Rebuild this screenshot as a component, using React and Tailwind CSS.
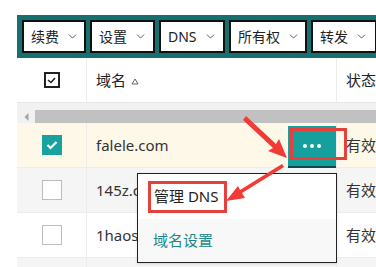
import { ChevronDown } from 'lucide-react';

const font = { fontFamily: '"Noto Sans", "Noto Sans CJK SC", sans-serif' };

const ToolButton = ({ label, w }) => (
  <div className={`h-[33px] ${w} shrink-0 border-2 border-[#111] bg-white flex items-center pl-[7px] gap-[7px] text-[14px] text-[#222]`}>
    <span>{label}</span>
    <ChevronDown className="w-[13px] h-[13px] text-[#444]" strokeWidth={1.6} />
  </div>
);

const Check = ({ on }) =>
  on ? (
    <div className="w-[20px] h-[20px] bg-[#17a2a0] flex items-center justify-center">
      <svg width="12" height="10" viewBox="0 0 12 10">
        <path d="M1.5 5 L4.5 8 L10.5 2" fill="none" stroke="white" strokeWidth="2.2" />
      </svg>
    </div>
  ) : (
    <div className="w-[20px] h-[20px] bg-white border border-[#bdbdbd]" />
  );

const Row = ({ bg, name, status, checked, children }) => (
  <div className={`h-[45px] flex ${bg} border-b border-[#ececec]`}>
    <div className="w-[70px] shrink-0 flex items-center justify-center border-r border-[#ececec]">
      {checked !== undefined && <Check on={checked} />}
    </div>
    <div className="w-[250px] shrink-0 flex items-center pl-[9px] border-r border-[#ececec] text-[15px] text-[#333] relative">
      {name}
      {children}
    </div>
    <div className="flex items-center pl-[9px] text-[15px] text-[#333] whitespace-nowrap">{status}</div>
  </div>
);

export default function App() {
  return (
    <div className="w-[376px] h-[267px] bg-white overflow-hidden relative pt-[15px] pl-[17px]" style={font}>
      <div className="h-[43px] bg-[#17706f] flex items-center gap-[4px] pl-[5px]">
        <ToolButton label="续费" w="w-[64px]" />
        <ToolButton label="设置" w="w-[65px]" />
        <ToolButton label="DNS" w="w-[66px]" />
        <ToolButton label="所有权" w="w-[78px]" />
        <ToolButton label="转发" w="w-[66px]" />
      </div>

      <div className="h-[45px] flex border-b border-[#e8e8e8] bg-white">
        <div className="w-[70px] shrink-0 flex items-center justify-center border-r border-[#ececec]">
          <div className="w-[16px] h-[16px] border-2 border-[#222] flex items-center justify-center">
            <svg width="9" height="7" viewBox="0 0 9 7">
              <path d="M1 3 L4 5.5 L8 1" fill="none" stroke="#222" strokeWidth="1.6" />
            </svg>
          </div>
        </div>
        <div className="w-[250px] shrink-0 flex items-center pl-[9px] gap-[5px] border-r border-[#ececec] text-[15px] text-[#222]">
          域名
          <svg width="8" height="7" viewBox="0 0 8 7" className="mt-[2px]">
            <path d="M4 1 L7 6 L1 6 Z" fill="none" stroke="#666" strokeWidth="1" />
          </svg>
        </div>
        <div className="flex items-center pl-[9px] text-[15px] text-[#222] whitespace-nowrap">状态</div>
      </div>

      <div className="h-[20px] bg-[#f1f1f1] flex items-end">
        <div className="w-[18px] h-[13px] flex items-center justify-center">
          <svg width="5" height="8" viewBox="0 0 5 8">
            <path d="M4.5 0 L0.5 4 L4.5 8 Z" fill="#a3a3a3" />
          </svg>
        </div>
        <div className="flex-1 h-[13px] bg-[#c1c1c1]" />
      </div>

      <Row bg="bg-[#fdf8e8]" name="falele.com" status="有效" checked>
        <div className="absolute right-0 top-[3px] w-[48px] h-[42px] bg-[#159f9d] border-b-2 border-[#0d4a49] flex items-center justify-center gap-[3px]">
          <span className="w-[4px] h-[4px] bg-white rounded-full" />
          <span className="w-[4px] h-[4px] bg-white rounded-full" />
          <span className="w-[4px] h-[4px] bg-white rounded-full" />
        </div>
        <div className="absolute right-[-11px] top-[5px] w-[57px] h-[32px] border-[3px] border-[#e5403b]" />
      </Row>
      <Row bg="bg-[#f5f5f5]" name="145z.com" status="有效" checked={false} />
      <Row bg="bg-white" name="1haos" status="有效" checked={false} />
      <Row bg="bg-[#f5f5f5]" name="" status="" />

      <div className="absolute left-[137px] top-[173px] w-[200px] h-[90px] bg-white border border-[#222] shadow-sm flex flex-col">
        <div className="h-[45px] flex items-center pl-[10px]">
          <div className="border-[3px] border-[#e5403b] h-[32px] w-[79px] flex items-center pl-[3px] text-[15px] text-[#222] whitespace-nowrap">
            管理 DNS
          </div>
        </div>
        <div className="flex-1 flex items-center pl-[15px] bg-[#f8f8f8] text-[15px] text-[#1a8a88]">域名设置</div>
      </div>

      <svg className="absolute left-0 top-0" width="376" height="267" viewBox="0 0 376 267">
        <path d="M246 116 L276 144 L279 139 L287 158 L268 151 L273 148 L243 120 Z" fill="#f23a36" />
        <path d="M284 167 L242 193 L245 198 L226 201 L238 186 L240 190 L282 164 Z" fill="#f23a36" />
      </svg>
    </div>
  );
}
